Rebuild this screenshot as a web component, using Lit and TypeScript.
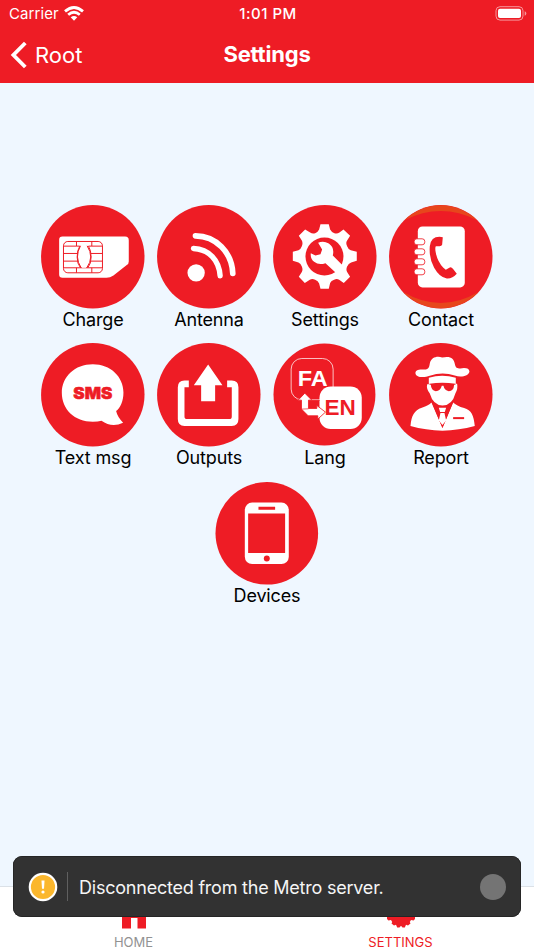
import { LitElement, html, svg, css } from "lit";
import { customElement, property } from "lit/decorators.js";

// Tile artwork shares one canvas: a 311-unit disc centred on (171, 170).
const art: Record<string, unknown> = {
  charge: svg`
    <path class="w" d="M80 109H268Q279 109 279 120V184Q279 191 273 195L233 226Q223 233 212 233H80Q70 233 70 223V119Q70 109 80 109Z"/>
    <g class="line">
      <rect x="83" y="124" width="117" height="94" rx="13"/>
      <path d="M122 124V138H132Q124 150 124 171Q124 191 134 203M168 124V138H158Q166 150 166 171Q166 191 156 203M83 160H125M83 183H126M200 160H165M200 183H164M83 203H200M122 203V218M168 203V218M122 138H83M168 138H200"/>
    </g>
    <path class="w" d="M137 137H152Q170 171 151 203H138Q122 171 137 137Z"/>
    <path class="line" d="M134 137Q115 171 136 203M154 137Q176 171 153 203"/>`,
  antenna: svg`
    <circle class="w" cx="133" cy="218" r="26"/>
    <path class="stroke" stroke-width="16" d="M125 145C172 147 202 181 205 227"/>
    <path class="stroke" stroke-width="17" d="M131 107C192 107 241 157 243 220"/>`,
  settings: svg`
    <path class="w" d="M158 72H183L187 88Q190 95 200 99Q208 102 215 97L227 88L247 107L238 121Q233 128 238 138Q241 147 249 150L267 155V182L250 187Q242 190 238 199Q234 209 238 216L247 230L228 249L214 239Q207 235 199 239Q190 242 187 249L183 266H158L154 250Q151 242 142 239Q133 235 126 239L111 249L93 230L102 216Q106 208 102 199Q99 190 92 187L75 182V155L92 150Q99 147 102 138Q106 129 102 121L93 107L112 88L127 97Q134 102 142 99Q151 95 154 88Z"/>
    <circle class="r" cx="170" cy="169" r="57"/>
    <path class="w" d="M151 128Q167 121 183 130Q201 142 195 166L231 202L204 218L173 189Q153 196 139 185Q127 176 129 159L143 166L158 162L163 148Z"/>`,
  contact: svg`
    <path fill="#e7461c" d="M62 60A155.5 155.5 0 0 1 280 60Q171 5 62 60ZM58 276A155.5 155.5 0 0 0 284 276Q171 342 58 276Z"/>
    <rect class="w" x="102" y="79" width="141" height="183" rx="14"/>
    ${[125, 155, 185, 215].map(
      (y) => svg`<rect class="tab" x="91" y="${y - 9}" width="32" height="18" rx="8"/>`
    )}
    <path class="r" d="M177 111L175 134Q173 139 165 138L156 138Q153 143 156 158Q161 184 178 202L186 209L198 202Q202 199 208 207L219 221Q206 236 189 235Q168 233 151 203Q135 174 138 138Q142 105 177 111Z"/>`,
  sms: svg`
    <path class="w" d="M171 78C224 78 263 115 263 163C263 189 254 208 241 219Q245 237 262 254Q228 270 197 248Q187 251 171 251C116 251 78 214 78 164C78 115 117 78 171 78Z"/>
    <text class="r sms" x="171" y="182" text-anchor="middle" textLength="117" lengthAdjust="spacingAndGlyphs">SMS</text>`,
  outputs: svg`
    <path class="w" d="M111 127V147H98V235Q98 243 106 243H233Q240 243 240 235V147H226V127H240Q260 127 260 147V243Q260 264 240 264H98Q78 264 78 243V147Q78 127 98 127Z"/>
    <path class="w" d="M169 79L212 141H190V189H148V141H126Z"/>`,
  lang: svg`
    <rect class="outline" x="70" y="61" width="126" height="124" rx="32"/>
    <text class="w lang" x="134.5" y="144" text-anchor="middle" textLength="90" lengthAdjust="spacingAndGlyphs">FA</text>
    <rect class="w" x="155" y="145" width="127" height="128" rx="34"/>
    <path d="M111 165L132 186H122V211H147V202L173 222L150 243V233H121L101 213V186H91Z" class="arrow"/>
    <path class="line thin" d="M101 213L122 212M123 187H156"/>
    <text class="r lang" x="217" y="230" text-anchor="middle" textLength="94" lengthAdjust="spacingAndGlyphs">EN</text>`,
  report: svg`
    <path class="w" d="M95 106C94 96 103 93 120 94C135 95 136 87 138 76C142 57 160 53 175 58C200 53 210 60 213 77C216 91 220 92 235 90Q256 88 257 100C256 113 231 120 213 112Q175 99 138 113C121 119 98 119 95 106Z"/>
    <path class="w" d="M135 119Q175 106 216 119V137H220Q223 152 215 165Q205 202 176 202Q148 201 138 166Q127 152 130 138H135Z"/>
    <path class="r" d="M137 137Q175 131 215 137V140H211Q210 159 195 159Q182 158 179 143H174Q170 159 156 159Q142 158 141 140H137Z"/>
    <path class="w" d="M143 193L176 270L208 193Q218 203 241 210C263 216 270 233 273 264Q225 277 176 278Q126 277 80 264C83 232 91 217 114 209Q135 202 143 193Z"/>
    <path class="r" d="M143 190L176 270L209 190L197 202Q176 218 155 202Z"/>
    <path class="w" d="M165 209H187L183 222H169ZM170 225H182L187 247L176 261L165 247Z"/>
    <path class="r" d="M208 237H241V243H208Z"/>`,
  devices: svg`
    <rect class="w" x="105" y="79" width="132" height="185" rx="22"/>
    <path class="r" d="M146 92H196V101H146ZM115 112H226V231H115Z"/>
    <circle class="r" cx="171" cy="247" r="9"/>`,
};

@customElement("menu-tile")
class MenuTile extends LitElement {
  @property() icon = "";
  @property() label = "";

  static styles = css`
    :host {
      display: flex;
      flex-direction: column;
      align-items: center;
      width: 116px;
      height: 138.1px;
      font-size: 18px;
      color: #000;
    }
    .disc { display: block; width: 103.6px; height: 103.6px; flex: none; }
    .label { margin-top: 0.5px; line-height: 22px; letter-spacing: -0.14px; white-space: nowrap; }
    .w { fill: #fff; }
    .r { fill: #ee1c25; }
    .line { fill: none; stroke: #ee1c25; stroke-width: 3; }
    .thin { stroke-width: 2; }
    .stroke { fill: none; stroke: #fff; stroke-linecap: round; }
    .tab { fill: #fff; stroke: #ee1c25; stroke-width: 2.5; }
    .outline { fill: none; stroke: #fff; stroke-width: 2.2; }
    .arrow { fill: #fff; stroke: #ee1c25; stroke-width: 2.5; }
    .sms { font: 900 48px Inter, sans-serif; stroke: #ee1c25; stroke-width: 1.5; }
    .lang { font: bold 68px "Liberation Sans", Arial, sans-serif; }
  `;

  render() {
    const lang = this.icon === "lang";
    const devices = this.icon === "devices";
    return html`
      <svg class="disc" viewBox="15.5 14.5 311 311" aria-hidden="true">
        <circle class="r" cx=${lang ? 170 : 171} cy=${lang ? 169 : devices ? 171.5 : 170} r=${lang ? 153 : devices ? 154 : 155.3} />
        ${art[this.icon]}
      </svg>
      <span class="label">${this.label}</span>
    `;
  }
}

@customElement("app-root")
class AppRoot extends LitElement {
  static styles = css`
    :host {
      display: flex;
      flex-direction: column;
      position: relative;
      width: 534px;
      height: 950px;
      overflow: hidden;
      background: #eff7ff;
      font-family: Inter, "Liberation Sans", sans-serif;
    }
    .header { height: 82.5px; flex: none; background: #ee1c25; color: #fff; }
    .row { display: grid; grid-template-columns: 1fr auto 1fr; align-items: center; }
    .status { height: 27px; padding: 0 7px 0 9px; font-size: 15px; }
    .carrier { display: flex; align-items: center; gap: 5px; letter-spacing: 0.1px; }
    .time { font-weight: 500; letter-spacing: 0.5px; }
    .battery { justify-self: end; }
    .nav { height: 55px; padding: 0 10px; }
    .back { display: flex; align-items: center; gap: 8px; font-size: 22px; }
    .title { margin-top: -2px; font-size: 22px; font-weight: 700; letter-spacing: -0.2px; }
    .content { flex: 1; padding: 122.7px 35px 0; display: flex; flex-wrap: wrap; justify-content: center; align-content: flex-start; }
    .tabs { display: flex; height: 63px; flex: none; border-top: 1px solid #dbe1e7; background: #fff; }
    .tab { flex: 1; display: flex; flex-direction: column; align-items: center; justify-content: flex-end; gap: 5px; padding-bottom: 0.5px; color: #929292; font-size: 13px; line-height: 15px; }
    .active { color: #ee1c25; }
    .toast { position: absolute; left: 13px; top: 856px; width: 508px; height: 61px; box-sizing: border-box; padding: 0 15px; display: flex; align-items: center; border-radius: 9px; background: #323232; box-shadow: inset 0 0 0 0.7px #222; color: #f5f5f5; }
    .rule { width: 1px; height: 29px; margin: 0 11px 0 9px; background: #606060; }
    .message { flex: 1; padding-top: 1px; font-size: 18px; letter-spacing: -0.22px; white-space: nowrap; }
    .dismiss { width: 26px; height: 26px; border-radius: 50%; background: #747474; }
  `;

  render() {
    const tiles = [
      ["charge", "Charge"], ["antenna", "Antenna"], ["settings", "Settings"],
      ["contact", "Contact"], ["sms", "Text msg"], ["outputs", "Outputs"],
      ["lang", "Lang"], ["report", "Report"], ["devices", "Devices"],
    ];
    return html`
      <header class="header">
        <div class="row status">
          <span class="carrier">Carrier
            <svg width="20" height="15" viewBox="0 0 20 15" fill="none" stroke="#fff" stroke-width="2.8">
              <path d="M1 5.4Q10-2.4 19 5.4M4.2 8.7Q10 3.8 15.8 8.7" />
              <path d="M6.7 11.3Q10 8.6 13.3 11.3L10 14.8Z" fill="#fff" stroke="none" />
            </svg>
          </span>
          <span class="time">1:01 PM</span>
          <svg class="battery" width="32" height="16" viewBox="0 0 32 16">
            <rect x="1" y="0.7" width="27" height="13.4" rx="4" fill="none" stroke="#f7959a" />
            <rect x="3" y="2.7" width="23" height="9.4" rx="2" fill="#fff" />
            <path d="M29.7 5.2Q31.3 5.7 31.3 7.5T29.7 9.8Z" fill="#f7959a" />
          </svg>
        </div>
        <div class="row nav">
          <span class="back">
            <svg width="17" height="28" viewBox="0 0 17 28" fill="none" stroke="#fff" stroke-width="3.8">
              <path d="M15.3 2L3.4 14L15.3 26" />
            </svg>Root
          </span>
          <span class="title">Settings</span>
        </div>
      </header>
      <main class="content">
        ${tiles.map(([icon, label]) => html`<menu-tile .icon=${icon} .label=${label}></menu-tile>`)}
      </main>
      <nav class="tabs">
        <div class="tab">
          <svg width="30" height="28" viewBox="0 0 30 28" fill="#ee1c25">
            <path d="M15 2L29 15H27V26.5H18.5V16H12V26.5H3V15H1Z" />
          </svg>HOME
        </div>
        <div class="tab active">
          <svg width="30" height="28" viewBox="0 0 30 28" fill="#ee1c25">
            <path d="M1 9H29V17L27.5 18.5L25 18L23.8 20L24.5 21.6L22 23.5L20 22.8L18.8 25.4H16.5Q15 22.4 13.5 25.4H11.2L10 22.8L8 23.5L5.5 21.6L6.2 20L5 18L2.5 18.5L1 17Z" />
          </svg>SETTINGS
        </div>
      </nav>
      <div class="toast">
        <svg width="30" height="30" viewBox="0 0 30 30">
          <circle cx="15" cy="15" r="13.2" fill="#fbb72d" stroke="#fff" stroke-width="2.2" />
          <path d="M13.5 8.5H16.5L16 16.8H14Z" fill="#fff" />
          <circle cx="15" cy="20" r="1.6" fill="#fff" />
        </svg>
        <span class="rule"></span>
        <span class="message">Disconnected from the Metro server.</span>
        <span class="dismiss"></span>
      </div>
    `;
  }
}
